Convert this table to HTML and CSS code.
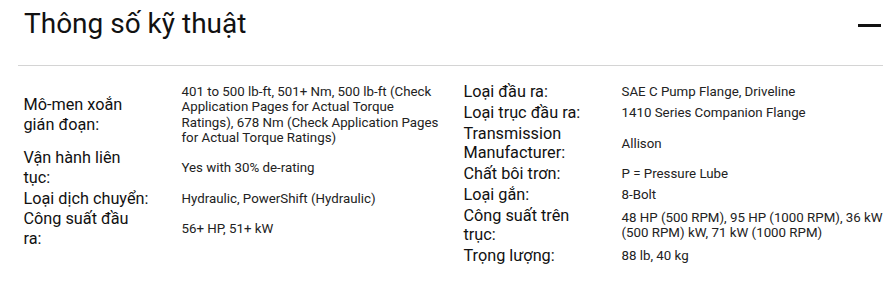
FILE: index.html
```html
<!DOCTYPE html>
<html lang="vi">
<head>
<meta charset="utf-8">
<title>Thông số kỹ thuật</title>
<link rel="stylesheet" href="styles.css">
</head>
<body>
<section class="spec">
  <header class="spec-head">
    <h2 class="spec-title">Thông số kỹ thuật</h2>
    <span class="spec-toggle" aria-label="Thu gọn"></span>
  </header>
  <div class="spec-body">
    <dl class="spec-list">
      <dt>Mô-men xoắn gián đoạn:</dt>
      <dd>401 to 500 lb-ft, 501+ Nm, 500 lb-ft (Check Application Pages for Actual Torque Ratings), 678 Nm (Check Application Pages for Actual Torque Ratings)</dd>
      <dt>Vận hành liên tục:</dt>
      <dd>Yes with 30% de-rating</dd>
      <dt>Loại dịch chuyển:</dt>
      <dd>Hydraulic, PowerShift (Hydraulic)</dd>
      <dt>Công suất đầu ra:</dt>
      <dd>56+ HP, 51+ kW</dd>
    </dl>
    <dl class="spec-list">
      <dt>Loại đầu ra:</dt>
      <dd>SAE C Pump Flange, Driveline</dd>
      <dt>Loại trục đầu ra:</dt>
      <dd>1410 Series Companion Flange</dd>
      <dt>Transmission Manufacturer:</dt>
      <dd>Allison</dd>
      <dt>Chất bôi trơn:</dt>
      <dd>P = Pressure Lube</dd>
      <dt>Loại gắn:</dt>
      <dd>8-Bolt</dd>
      <dt>Công suất trên trục:</dt>
      <dd>48 HP (500 RPM), 95 HP (1000 RPM), 36 kW (500 RPM) kW, 71 kW (1000 RPM)</dd>
      <dt>Trọng lượng:</dt>
      <dd>88 lb, 40 kg</dd>
    </dl>
  </div>
</section>
</body>
</html>
```

FILE: styles.css
```css
html, body {
  margin: 0;
  padding: 0;
  background: #ffffff;
}

body {
  font-family: Roboto, "Liberation Sans", Arial, sans-serif;
  color: #111111;
  overflow: hidden;
}

.spec {
  margin-left: 18px;
  overflow: hidden;
}

.spec-head {
  box-sizing: border-box;
  height: 66px;
  display: flex;
  justify-content: space-between;
  align-items: flex-start;
  padding: 6px 2px 0 6px;
  border-bottom: 1px solid #d4d4d4;
}

.spec-title {
  margin: 0;
  font-size: 28px;
  line-height: 36px;
  font-weight: 400;
  color: #111111;
}

.spec-toggle {
  display: block;
  width: 23px;
  height: 3px;
  margin-top: 18px;
  background: #111111;
}

.spec-body {
  display: grid;
  grid-template-columns: 440px 440px;
  align-items: start;
  padding: 16px 0 0 5.5px;
}

.spec-list {
  margin: 0;
  display: grid;
  grid-template-columns: 158px 262.5px;
  align-content: start;
  row-gap: 1px;
  align-items: center;
}

.spec-list dt {
  margin: 0;
  width: 125.5px;
  font-size: 16.25px;
  line-height: 19.75px;
  color: #111111;
}

.spec-list dd {
  margin: 0;
  padding: 1.5px 0;
  font-size: 13.3px;
  line-height: 15.5px;
  color: #222222;
}
```
